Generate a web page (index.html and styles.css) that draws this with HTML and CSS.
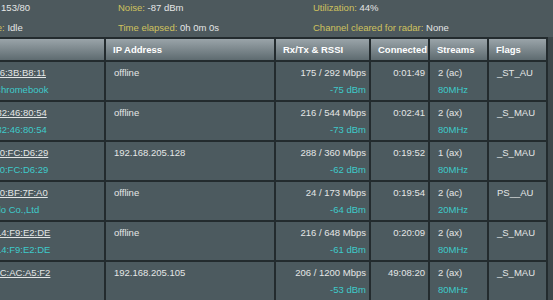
FILE: index.html
```html
<!DOCTYPE html>
<html>
<head>
<meta charset="utf-8">
<link rel="stylesheet" href="styles.css">
</head>
<body>
<div class="page">
  <div class="info">
    <div><span class="lbl">Chanspec:</span> 153/80</div>
    <div><span class="lbl">Noise:</span> -87 dBm</div>
    <div><span class="lbl">Utilization:</span> 44%</div>
    <div><span class="lbl">Radar state:</span> Idle</div>
    <div><span class="lbl">Time elapsed:</span> 0h 0m 0s</div>
    <div><span class="lbl">Channel cleared for radar:</span> None</div>
  </div>
  <div class="clients">
    <table class="tbl">
      <thead>
        <tr>
          <th class="c-name">Name</th>
          <th class="c-ip">IP Address</th>
          <th class="c-rate">Rx/Tx &amp; RSSI</th>
          <th class="c-conn">Connected</th>
          <th class="c-str">Streams</th>
          <th class="c-flags">Flags</th>
        </tr>
      </thead>
      <tbody>
        <tr>
          <td><span class="mac">40:16:96:3B:B8:11</span><br><span class="sub">Ben's Chromebook</span></td>
          <td>offline</td>
          <td class="num">175 / 292 Mbps<br><span class="sub">-75 dBm</span></td>
          <td class="num">0:01:49</td>
          <td>2 (ac)<br><span class="sub">80MHz</span></td>
          <td>_ST_AU</td>
        </tr>
        <tr>
          <td><span class="mac">6A:2E:32:46:80:54</span><br><span class="sub">6A:2E:32:46:80:54</span></td>
          <td>offline</td>
          <td class="num">216 / 544 Mbps<br><span class="sub">-73 dBm</span></td>
          <td class="num">0:02:41</td>
          <td>2 (ax)<br><span class="sub">80MHz</span></td>
          <td>_S_MAU</td>
        </tr>
        <tr>
          <td><span class="mac">48:22:50:FC:D6:29</span><br><span class="sub">48:22:50:FC:D6:29</span></td>
          <td>192.168.205.128</td>
          <td class="num">288 / 360 Mbps<br><span class="sub">-62 dBm</span></td>
          <td class="num">0:19:52</td>
          <td>1 (ax)<br><span class="sub">80MHz</span></td>
          <td>_S_MAU</td>
        </tr>
        <tr>
          <td><span class="mac">98:41:50:BF:7F:A0</span><br><span class="sub">Nintendo Co.,Ltd</span></td>
          <td>offline</td>
          <td class="num">24 / 173 Mbps<br><span class="sub">-64 dBm</span></td>
          <td class="num">0:19:54</td>
          <td>2 (ac)<br><span class="sub">20MHz</span></td>
          <td>PS__AU</td>
        </tr>
        <tr>
          <td><span class="mac">2C:56:14:F9:E2:DE</span><br><span class="sub">2C:56:14:F9:E2:DE</span></td>
          <td>offline</td>
          <td class="num">216 / 648 Mbps<br><span class="sub">-61 dBm</span></td>
          <td class="num">0:20:09</td>
          <td>2 (ax)<br><span class="sub">80MHz</span></td>
          <td>_S_MAU</td>
        </tr>
        <tr>
          <td><span class="mac">70:28:8C:AC:A5:F2</span></td>
          <td>192.168.205.105</td>
          <td class="num">206 / 1200 Mbps<br><span class="sub">-53 dBm</span></td>
          <td class="num">49:08:20</td>
          <td>2 (ax)<br><span class="sub">80MHz</span></td>
          <td>_S_MAU</td>
        </tr>
      </tbody>
    </table>
  </div>
</div>
</body>
</html>
```

FILE: styles.css
```css
html, body {
  margin: 0;
  padding: 0;
}
body {
  width: 553px;
  height: 300px;
  overflow: hidden;
  background: #4d595d;
  font-family: "Liberation Sans", Arial, sans-serif;
  font-size: 9.5px;
  color: #e4e6e6;
}
.page {
  width: 620px;
}
.info {
  display: grid;
  grid-template-columns: 165px 195px 1fr;
  row-gap: 4px;
  line-height: 16px;
  margin-left: -47px;
  white-space: nowrap;
}
.lbl {
  color: #cfc25e;
}
.clients {
  margin-top: 1px;
  margin-left: -42px;
  width: 610px;
  background: #3d474b;
}
.tbl {
  table-layout: fixed;
  width: 590px;
  border-collapse: separate;
  border-spacing: 2px;
  background: #232b2e;
}
.tbl th, .tbl td {
  box-sizing: border-box;
  white-space: nowrap;
  overflow: visible;
  text-align: left;
}
.tbl th {
  height: 21px;
  padding: 0 0 0 7px;
  background: linear-gradient(#9aa4a9, #5e6b70);
  color: #ffffff;
  font-weight: bold;
  vertical-align: middle;
}
.tbl td {
  height: 38px;
  padding: 2px 3px 0 8px;
  line-height: 17px;
  vertical-align: top;
  background: #4c5a5f;
}
.tbl td.num {
  text-align: right;
}
.c-name { width: 144px; }
.c-ip { width: 168px; }
.c-rate { width: 93px; }
.c-conn { width: 57px; }
.c-str { width: 57px; }
.c-flags { width: 57px; }
.mac {
  text-decoration: underline;
  color: #e4e6e6;
}
.sub {
  color: #3ecaca;
}
```
